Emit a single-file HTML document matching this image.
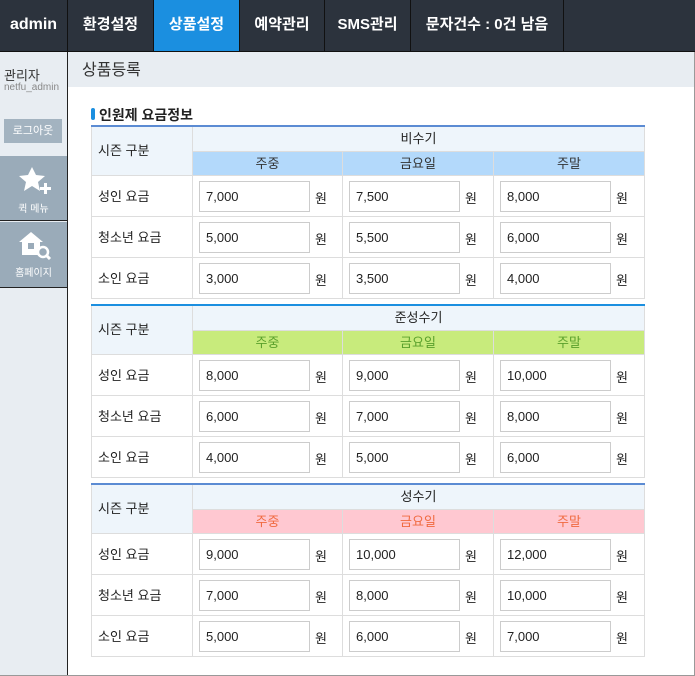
<!DOCTYPE html>
<html><head><meta charset="utf-8"><style>
*{margin:0;padding:0;box-sizing:border-box}
body{width:695px;height:676px;position:relative;overflow:hidden;background:#fff;font-family:"Liberation Sans","Noto Sans CJK KR",sans-serif;color:#222}
.top{position:absolute;left:0;top:0;width:695px;height:52px;background:#2c333d;border-bottom:1px solid #111}
.nav{position:absolute;top:0;height:51px;line-height:50px;color:#fff;font-weight:bold;font-size:15px;text-align:center;border-right:1px solid #111}
.side{position:absolute;left:0;top:52px;width:68px;height:624px;background:#e8edf2;border-right:1px solid #222}
.frame{position:absolute;right:0;top:52px;width:1px;height:624px;background:#999}
.bot{position:absolute;left:0;bottom:0;width:695px;height:1px;background:#999}
.ch{position:absolute;left:68px;top:52px;width:626px;height:35px;background:#e8edf2;font-size:16px;line-height:38px;padding-left:14px;color:#333}
.cell{position:absolute;border-right:1px solid #ddd;border-bottom:1px solid #ddd;font-size:13px}
.inp{position:absolute;width:111px;height:31px;border:1px solid #ccc;font-size:13px;line-height:29px;padding-left:6px;background:#fff}
.won{position:absolute;font-size:13px}
</style></head><body>
<div class="top"></div>
<div class="nav" style="left:0;width:68px;font-size:16px">admin</div>
<div class="nav" style="left:68px;width:86px">환경설정</div>
<div class="nav" style="left:154px;width:86px;background:#1b8fe0">상품설정</div>
<div class="nav" style="left:240px;width:85px">예약관리</div>
<div class="nav" style="left:325px;width:86px">SMS관리</div>
<div class="nav" style="left:411px;width:153px">문자건수 : 0건 남음</div>
<div class="side">
<div style="position:absolute;left:4px;top:13px;font-size:13px;color:#333">관리자</div>
<div style="position:absolute;left:4px;top:30px;font-size:10px;color:#888">netfu_admin</div>
<div style="position:absolute;left:4px;top:67px;width:58px;height:24px;background:#a3b3c0;color:#fff;font-size:11px;line-height:24px;text-align:center">로그아웃</div>
<div style="position:absolute;left:0;top:104px;width:67px;height:65px;background:#9aabb9;border-bottom:1px solid #222">
<svg style="position:absolute;left:18px;top:10px" width="34" height="30" viewBox="0 0 34 30"><path d="M14 1l4 8 9 1-7 6 2 9-8-5-8 5 2-9-7-6 9-1z" fill="#fff"/><path d="M26 17h3v4h4v3h-4v4h-3v-4h-4v-3h4z" fill="#fff"/></svg>
<div style="position:absolute;top:44px;width:67px;text-align:center;color:#fff;font-size:10px">퀵 메뉴</div></div>
<div style="position:absolute;left:0;top:170px;width:67px;height:66px;background:#9aabb9;border-bottom:1px solid #222">
<svg style="position:absolute;left:18px;top:8px" width="34" height="30" viewBox="0 0 34 30"><path d="M13 2l12 10h-3v13H4V12H1z" fill="#fff"/><rect x="10" y="13" width="6" height="6" fill="#9aabb9"/><circle cx="25" cy="22" r="5" fill="#9aabb9" stroke="#fff" stroke-width="2.5"/><path d="M28 25l4 4" stroke="#fff" stroke-width="3"/></svg>
<div style="position:absolute;top:42px;width:67px;text-align:center;color:#fff;font-size:10px">홈페이지</div></div>
</div>
<div class="frame"></div><div class="bot"></div>
<div class="ch">상품등록</div>
<div style="position:absolute;left:91px;top:108px;width:4px;height:12px;background:#1b8fe0;border-radius:2px"></div>
<div style="position:absolute;left:99px;top:105px;font-size:14px;font-weight:bold">인원제 요금정보</div>
<div id="t"></div>
<script>
var T=[{y:126,bar:'#5b8bd3',title:'비수기',hbg:'#b3d9fb',hc:'#333',v:[['7,000','7,500','8,000'],['5,000','5,500','6,000'],['3,000','3,500','4,000']]},
{y:305,bar:'#1b8fe0',title:'준성수기',hbg:'#c8eb7c',hc:'#5aa02c',v:[['8,000','9,000','10,000'],['6,000','7,000','8,000'],['4,000','5,000','6,000']]},
{y:484,bar:'#5b8bd3',title:'성수기',hbg:'#ffc8d1',hc:'#f06a40',v:[['9,000','10,000','12,000'],['7,000','8,000','10,000'],['5,000','6,000','7,000']]}];
var cx=[193,343,494,645],L=['성인 요금','청소년 요금','소인 요금'],H=['주중','금요일','주말'],h='';
T.forEach(function(t){var y=t.y;
h+='<div style="position:absolute;left:91px;top:'+(y-1)+'px;width:554px;height:2px;background:'+t.bar+'"></div>';
h+='<div class="cell" style="left:91px;top:'+(y+1)+'px;width:102px;height:49px;background:#eef5fb;border-left:1px solid #ddd;line-height:48px;padding-left:6px">시즌 구분</div>';
h+='<div class="cell" style="left:193px;top:'+(y+1)+'px;width:452px;height:25px;background:#eef5fb;text-align:center;line-height:24px">'+t.title+'</div>';
for(var i=0;i<3;i++)h+='<div class="cell" style="left:'+cx[i]+'px;top:'+(y+26)+'px;width:'+(cx[i+1]-cx[i])+'px;height:24px;background:'+t.hbg+';color:'+t.hc+';text-align:center;line-height:24px">'+H[i]+'</div>';
for(var r=0;r<3;r++){var ry=y+50+r*41;
h+='<div class="cell" style="left:91px;top:'+ry+'px;width:102px;height:41px;border-left:1px solid #ddd;line-height:41px;padding-left:6px">'+L[r]+'</div>';
for(var i=0;i<3;i++){h+='<div class="cell" style="left:'+cx[i]+'px;top:'+ry+'px;width:'+(cx[i+1]-cx[i])+'px;height:41px"></div>';
h+='<div class="inp" style="left:'+(cx[i]+6)+'px;top:'+(ry+5)+'px">'+t.v[r][i]+'</div>';
h+='<div class="won" style="left:'+(cx[i]+122)+'px;top:'+(ry+12)+'px">원</div>';}}
});
document.getElementById('t').innerHTML=h;
</script>
</body></html>
